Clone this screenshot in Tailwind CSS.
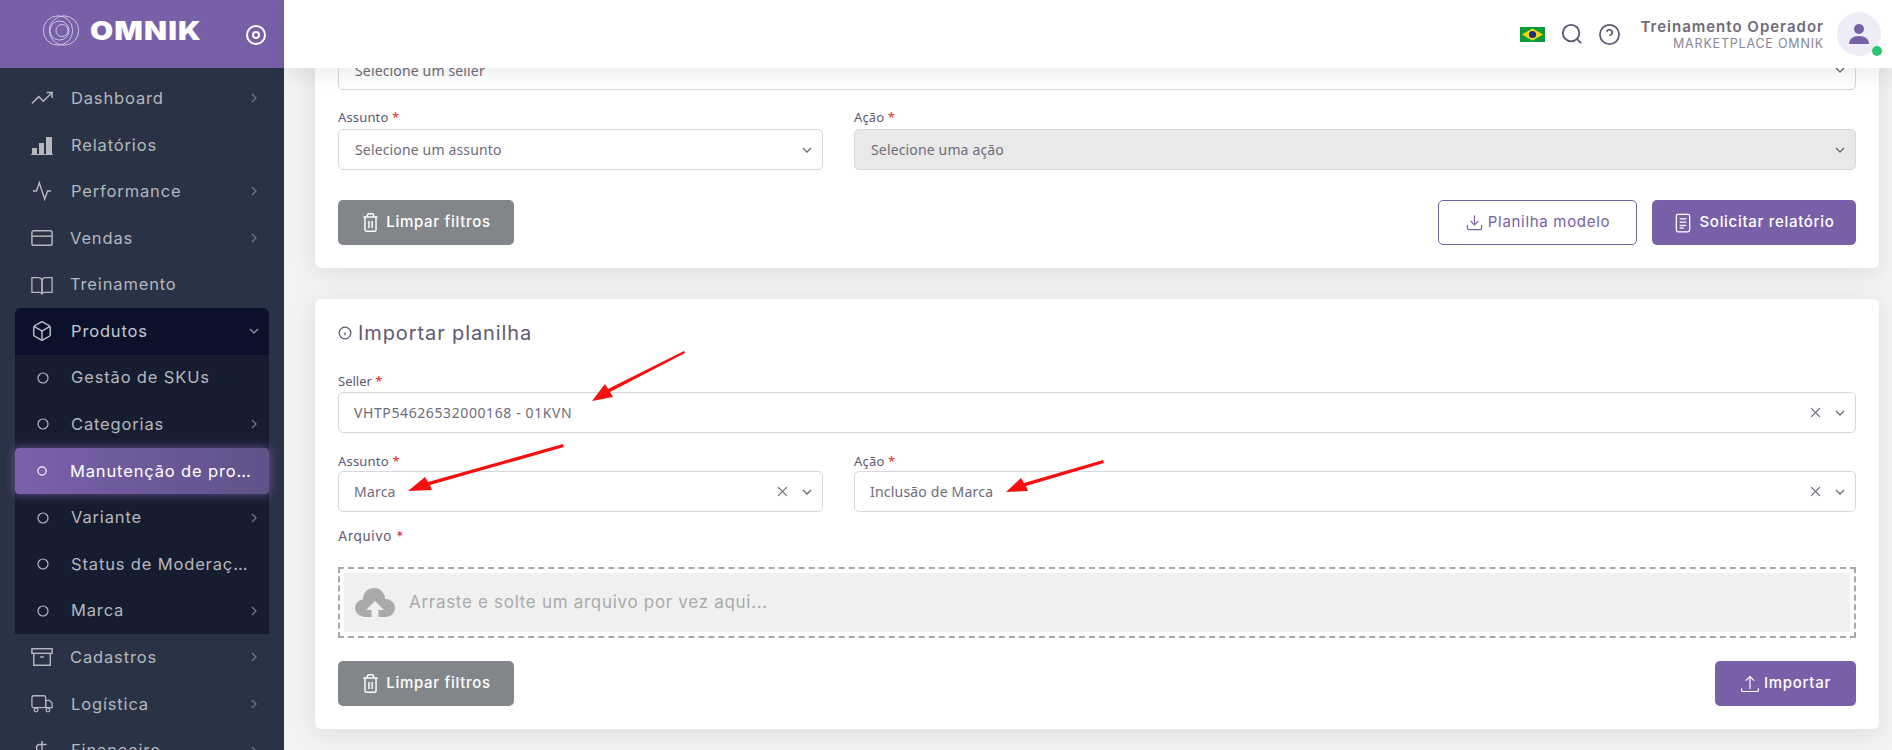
<!DOCTYPE html>
<html lang="pt-BR">
  <head>
    <meta charset="UTF-8" />
    <meta name="viewport" content="width=device-width, initial-scale=1.0" />
    <script src="https://cdn.jsdelivr.net/npm/@tailwindcss/browser@4"></script>
    <title>Omnik - Manutenção de produtos</title>
  </head>
  <body class="relative h-[750px] w-[1892px] overflow-hidden bg-[#f2f3f3] font-['Inter',sans-serif] text-[#6e6b7b]">
    <div class="flex h-full">
      <!-- SIDEBAR -->
      <aside class="h-full w-[284px] shrink-0 overflow-hidden bg-[#2a3246]">
        <div class="flex h-[68px] items-start bg-[#7860a9] pl-[43px] pt-[15px]">
          <svg class="h-[32px] w-[38px] shrink-0" viewBox="0 0 38 32" fill="none" stroke="#d6cde8" stroke-width="0.9">
            <circle cx="15" cy="15.500" r="14.700" />
            <circle cx="21" cy="15.500" r="14.700" />
            <circle cx="16.500" cy="15.500" r="9.500" />
            <circle cx="19" cy="15.500" r="6" />
          </svg>
          <span class="ml-[9px] mt-[-1px] w-[127px] origin-left scale-x-[1.15] text-[26px] leading-[34px] font-black tracking-[1px] text-white">OMNIK</span>
          <svg class="ml-[29px] mt-[10px] h-[20px] w-[20px] shrink-0" viewBox="0 0 20 20" fill="none" stroke="white" stroke-width="2">
            <circle cx="10" cy="10" r="9" />
            <circle cx="10" cy="10" r="3" />
          </svg>
        </div>

        <nav class="px-[15px] pt-[7px] text-[16.5px] tracking-[0.85px] text-[#b4b7bd]">
          <a class="flex h-[46.6px] items-center pl-[16px] pr-[7px]">
            <svg class="h-[22px] w-[22px] shrink-0" viewBox="0 0 24 24" fill="none" stroke="currentColor" stroke-width="1.6"><polyline points="23 6 13.5 15.5 8.5 10.5 1 18" /><polyline points="17 6 23 6 23 12" /></svg>
            <span class="ml-[18px] flex-1">Dashboard</span>
            <svg class="h-[16px] w-[16px] text-[#6f7585]" viewBox="0 0 24 24" fill="none" stroke="currentColor" stroke-width="2"><polyline points="9 18 15 12 9 6" /></svg>
          </a>
          <a class="flex h-[46.6px] items-center pl-[16px] pr-[7px]">
            <svg class="h-[22px] w-[22px] shrink-0" viewBox="0 0 22 22" fill="#b4b7bd"><rect x="1" y="14" width="5" height="6" /><rect x="8" y="9" width="5" height="11" /><rect x="15" y="3" width="6" height="17" /><rect x="0" y="20" width="22" height="1" /></svg>
            <span class="ml-[18px] flex-1">Relatórios</span>
          </a>
          <a class="flex h-[46.6px] items-center pl-[16px] pr-[7px]">
            <svg class="h-[22px] w-[22px] shrink-0" viewBox="0 0 24 24" fill="none" stroke="currentColor" stroke-width="1.6"><polyline points="22 12 18 12 15 21 9 3 6 12 2 12" /></svg>
            <span class="ml-[18px] flex-1">Performance</span>
            <svg class="h-[16px] w-[16px] text-[#6f7585]" viewBox="0 0 24 24" fill="none" stroke="currentColor" stroke-width="2"><polyline points="9 18 15 12 9 6" /></svg>
          </a>
          <a class="flex h-[46.6px] items-center pl-[16px] pr-[7px]">
            <svg class="h-[22px] w-[22px] shrink-0" viewBox="0 0 24 24" fill="none" stroke="currentColor" stroke-width="1.6"><rect x="1" y="4" width="22" height="16" rx="2" /><line x1="1" y1="10" x2="23" y2="10" /></svg>
            <span class="ml-[17px] flex-1">Vendas</span>
            <svg class="h-[16px] w-[16px] text-[#6f7585]" viewBox="0 0 24 24" fill="none" stroke="currentColor" stroke-width="2"><polyline points="9 18 15 12 9 6" /></svg>
          </a>
          <a class="flex h-[46.6px] items-center pl-[16px] pr-[7px]">
            <svg class="h-[22px] w-[22px] shrink-0" viewBox="0 0 24 24" fill="none" stroke="currentColor" stroke-width="1.4"><path d="M1 4h7a4 4 0 0 1 4 3v15a3 3 0 0 0-3-2H1z" /><path d="M23 4h-7a4 4 0 0 0-4 3v15a3 3 0 0 1 3-2h8z" /></svg>
            <span class="ml-[17px] flex-1">Treinamento</span>
          </a>

          <div>
            <a class="flex h-[46.6px] items-center rounded-t-[6px] bg-[#0c112b] pl-[16px] pr-[7px] text-[#c4c7cf]">
              <svg class="h-[22px] w-[22px] shrink-0" viewBox="0 0 24 24" fill="none" stroke="currentColor" stroke-width="1.5"><path d="M21 16V8a2 2 0 0 0-1-1.73l-7-4a2 2 0 0 0-2 0l-7 4A2 2 0 0 0 3 8v8a2 2 0 0 0 1 1.73l7 4a2 2 0 0 0 2 0l7-4A2 2 0 0 0 21 16z" /><polyline points="3.27 6.96 12 12.01 20.73 6.96" /><line x1="12" y1="22.08" x2="12" y2="12" /></svg>
              <span class="ml-[18px] flex-1">Produtos</span>
              <svg class="h-[16px] w-[16px] text-[#8b8f9c]" viewBox="0 0 24 24" fill="none" stroke="currentColor" stroke-width="2"><polyline points="6 9 12 15 18 9" /></svg>
            </a>
            <div class="bg-[#161d30]">
              <a class="flex h-[46.6px] items-center pl-[22px] pr-[7px]">
                <svg class="h-[12px] w-[12px] shrink-0" viewBox="0 0 12 12" fill="none" stroke="currentColor" stroke-width="1.2"><circle cx="6" cy="6" r="5" /></svg>
                <span class="ml-[22px] flex-1 truncate">Gestão de SKUs</span>
              </a>
              <a class="flex h-[46.6px] items-center pl-[22px] pr-[7px]">
                <svg class="h-[12px] w-[12px] shrink-0" viewBox="0 0 12 12" fill="none" stroke="currentColor" stroke-width="1.2"><circle cx="6" cy="6" r="5" /></svg>
                <span class="ml-[22px] flex-1 truncate">Categorias</span>
                <svg class="h-[16px] w-[16px] text-[#6f7585]" viewBox="0 0 24 24" fill="none" stroke="currentColor" stroke-width="2"><polyline points="9 18 15 12 9 6" /></svg>
              </a>
              <a class="flex h-[46.6px] items-center rounded-[4px] bg-gradient-to-r from-[#7b60ab] to-[#5f5289] pl-[22px] pr-[15px] text-white shadow-[0_0_10px_1px_rgba(120,96,169,0.7)]">
                <svg class="h-[10px] w-[10px] shrink-0" viewBox="0 0 12 12" fill="none" stroke="currentColor" stroke-width="1.4"><circle cx="6" cy="6" r="5" /></svg>
                <span class="ml-[23px] flex-1 truncate">Manutenção de produtos</span>
              </a>
              <a class="flex h-[46.6px] items-center pl-[22px] pr-[7px]">
                <svg class="h-[12px] w-[12px] shrink-0" viewBox="0 0 12 12" fill="none" stroke="currentColor" stroke-width="1.2"><circle cx="6" cy="6" r="5" /></svg>
                <span class="ml-[22px] flex-1 truncate">Variante</span>
                <svg class="h-[16px] w-[16px] text-[#6f7585]" viewBox="0 0 24 24" fill="none" stroke="currentColor" stroke-width="2"><polyline points="9 18 15 12 9 6" /></svg>
              </a>
              <a class="flex h-[46.6px] items-center pl-[22px] pr-[19px]">
                <svg class="h-[12px] w-[12px] shrink-0" viewBox="0 0 12 12" fill="none" stroke="currentColor" stroke-width="1.2"><circle cx="6" cy="6" r="5" /></svg>
                <span class="ml-[22px] flex-1 truncate">Status de Moderação</span>
              </a>
              <a class="flex h-[46.6px] items-center pl-[22px] pr-[7px]">
                <svg class="h-[12px] w-[12px] shrink-0" viewBox="0 0 12 12" fill="none" stroke="currentColor" stroke-width="1.2"><circle cx="6" cy="6" r="5" /></svg>
                <span class="ml-[22px] flex-1 truncate">Marca</span>
                <svg class="h-[16px] w-[16px] text-[#6f7585]" viewBox="0 0 24 24" fill="none" stroke="currentColor" stroke-width="2"><polyline points="9 18 15 12 9 6" /></svg>
              </a>
            </div>
          </div>

          <a class="flex h-[46.6px] items-center pl-[16px] pr-[7px]">
            <svg class="h-[22px] w-[22px] shrink-0" viewBox="0 0 24 24" fill="none" stroke="currentColor" stroke-width="1.6"><polyline points="21 8 21 21 3 21 3 8" /><rect x="1" y="3" width="22" height="5" /><line x1="10" y1="12" x2="14" y2="12" /></svg>
            <span class="ml-[17px] flex-1">Cadastros</span>
            <svg class="h-[16px] w-[16px] text-[#6f7585]" viewBox="0 0 24 24" fill="none" stroke="currentColor" stroke-width="2"><polyline points="9 18 15 12 9 6" /></svg>
          </a>
          <a class="flex h-[46.6px] items-center pl-[16px] pr-[7px]">
            <svg class="h-[22px] w-[22px] shrink-0" viewBox="0 0 24 24" fill="none" stroke="currentColor" stroke-width="1.4"><rect x="1" y="3" width="15" height="13" rx="2" /><polygon points="16 8 20 8 23 11 23 16 16 16 16 8" /><circle cx="5.5" cy="18.5" r="2" /><circle cx="18.5" cy="18.5" r="2" /></svg>
            <span class="ml-[18px] flex-1">Logística</span>
            <svg class="h-[16px] w-[16px] text-[#6f7585]" viewBox="0 0 24 24" fill="none" stroke="currentColor" stroke-width="2"><polyline points="9 18 15 12 9 6" /></svg>
          </a>
          <a class="flex h-[46.6px] items-center pl-[16px] pr-[7px]">
            <svg class="h-[22px] w-[22px] shrink-0" viewBox="0 0 24 24" fill="none" stroke="currentColor" stroke-width="1.6"><line x1="12" y1="1" x2="12" y2="23" /><path d="M17 5H9.5a3.5 3.5 0 0 0 0 7h5a3.5 3.5 0 0 1 0 7H6" /></svg>
            <span class="ml-[18px] flex-1">Financeiro</span>
            <svg class="h-[16px] w-[16px] text-[#6f7585]" viewBox="0 0 24 24" fill="none" stroke="currentColor" stroke-width="2"><polyline points="9 18 15 12 9 6" /></svg>
          </a>
        </nav>
      </aside>

      <div class="flex h-full min-w-0 flex-1 flex-col">
        <!-- TOPBAR -->
        <header class="relative z-10 flex h-[68px] shrink-0 items-center justify-end bg-white pr-[11px] shadow-[0_4px_24px_rgba(34,41,47,0.1)]">
          <svg class="h-[15px] w-[25px]" viewBox="0 0 25 15"><rect width="25" height="15" fill="#0d9a3a" /><polygon points="12.5 1.5 23 7.5 12.5 13.5 2 7.5" fill="#f7d90f" /><circle cx="12.5" cy="7.5" r="3.6" fill="#1c2f7c" /></svg>
          <svg class="ml-[16px] h-[22px] w-[22px] text-[#5e5873]" viewBox="0 0 24 24" fill="none" stroke="currentColor" stroke-width="2"><circle cx="11" cy="11" r="9" /><line x1="22" y1="22" x2="17.5" y2="17.5" /></svg>
          <svg class="ml-[15px] h-[23px] w-[23px] text-[#5e5873]" viewBox="0 0 24 24" fill="none" stroke="currentColor" stroke-width="1.8"><circle cx="12" cy="12" r="10" /><path d="M9.09 9a3 3 0 0 1 5.83 1c0 2-3 3-3 3" /><line x1="12" y1="17" x2="12.01" y2="17" /></svg>
          <div class="ml-[19px] text-right">
            <p class="text-[15px] leading-[18px] font-semibold tracking-[1px] text-[#6e6b7b]">Treinamento Operador</p>
            <p class="text-[12.5px] leading-[15px] tracking-[0.8px] text-[#8a8796]">MARKETPLACE OMNIK</p>
          </div>
          <div class="relative ml-[13px] flex h-[44px] w-[44px] items-center justify-center rounded-full bg-[#eeecf6]">
            <svg class="h-[22px] w-[22px]" viewBox="0 0 22 22" fill="#7860a9"><circle cx="11" cy="6" r="5" /><path d="M1 21c0-5 4-8 10-8s10 3 10 8z" /></svg>
            <span class="absolute bottom-[0px] right-[-1px] h-[10px] w-[10px] rounded-full bg-[#28c76f]"></span>
          </div>
        </header>

        <!-- CONTENT -->
        <main class="min-h-0 flex-1 overflow-hidden pl-[31px] pr-[13px]">
          <section class="-mt-[19px] h-[219px] rounded-[6px] bg-white px-[23px] shadow-[0_4px_24px_rgba(34,41,47,0.1)]">
            <div class="flex h-[41px] items-center justify-between rounded-[5px] border border-[#d8d6de] bg-white pl-[16px] pr-[7px] font-['Noto_Sans',sans-serif] text-[14px] tracking-[0.15px] text-[#6e6b7b]">
              <span class="pt-[2px]">Selecione um seller</span>
              <svg class="h-[16px] w-[16px]" viewBox="0 0 24 24" fill="none" stroke="currentColor" stroke-width="2"><polyline points="6 9 12 15 18 9" /></svg>
            </div>
            <div class="mt-[16px] grid grid-cols-[485px_1fr] gap-x-[31px] font-['Noto_Sans',sans-serif] tracking-[0.15px]">
              <div>
                <label class="block h-[23px] text-[13px] leading-[22px] text-[#5e5873]">Assunto <span class="text-[#ea1f1f]">*</span></label>
                <div class="flex h-[41px] items-center justify-between rounded-[5px] border border-[#d8d6de] bg-white pl-[16px] pr-[7px] text-[14px]">
                  <span>Selecione um assunto</span>
                  <svg class="h-[16px] w-[16px]" viewBox="0 0 24 24" fill="none" stroke="currentColor" stroke-width="2"><polyline points="6 9 12 15 18 9" /></svg>
                </div>
              </div>
              <div>
                <label class="block h-[23px] text-[13px] leading-[22px] text-[#5e5873]">Ação <span class="text-[#ea1f1f]">*</span></label>
                <div class="flex h-[41px] items-center justify-between rounded-[5px] border border-[#d8d6de] bg-[#e9e9e9] pl-[16px] pr-[7px] text-[14px]">
                  <span>Selecione uma ação</span>
                  <svg class="h-[16px] w-[16px]" viewBox="0 0 24 24" fill="none" stroke="currentColor" stroke-width="2"><polyline points="6 9 12 15 18 9" /></svg>
                </div>
              </div>
            </div>
            <div class="mt-[30px] flex items-center justify-between text-[15px] font-medium tracking-[0.7px]">
              <button class="flex h-[45px] w-[176px] items-center justify-center gap-[6px] rounded-[5px] bg-[#82868b] text-white">
                <svg class="h-[19px] w-[19px]" viewBox="0 0 24 24" fill="none" stroke="currentColor" stroke-width="1.8"><polyline points="3 5 21 5" /><path d="M19 5v16a2 2 0 0 1-2 2H7a2 2 0 0 1-2-2V5m3 0V3a2 2 0 0 1 2-2h4a2 2 0 0 1 2 2v2" /><line x1="10" y1="10" x2="10" y2="19" /><line x1="14" y1="10" x2="14" y2="19" /></svg>
                Limpar filtros
              </button>
              <div class="flex gap-[15px]">
                <button class="flex h-[45px] w-[199px] items-center justify-center gap-[4px] rounded-[5px] border border-[#7860a9] bg-white font-normal text-[#7860a9]">
                  <svg class="h-[19px] w-[19px]" viewBox="0 0 24 24" fill="none" stroke="currentColor" stroke-width="1.5"><path d="M21 15v4a2 2 0 0 1-2 2H5a2 2 0 0 1-2-2v-4" /><polyline points="7 10 12 15 17 10" /><line x1="12" y1="15" x2="12" y2="3" /></svg>
                  Planilha modelo
                </button>
                <button class="flex h-[45px] w-[204px] items-center justify-center gap-[6px] rounded-[5px] bg-[#7860a9] text-white">
                  <svg class="h-[20px] w-[20px]" viewBox="0 0 24 24" fill="none" stroke="currentColor" stroke-width="1.5"><rect x="4" y="1.5" width="16" height="21" rx="2" /><line x1="8" y1="7" x2="16" y2="7" /><line x1="8" y1="11" x2="16" y2="11" /><line x1="8" y1="15" x2="16" y2="15" /><line x1="8" y1="18" x2="13" y2="18" /></svg>
                  Solicitar relatório
                </button>
              </div>
            </div>
          </section>

          <section class="mt-[31px] h-[430px] rounded-[6px] bg-white px-[23px] pt-[22px] shadow-[0_4px_24px_rgba(34,41,47,0.1)]">
            <h2 class="flex h-[24px] items-center text-[20px] font-normal tracking-[0.9px] text-[#5e5873]">
              <svg class="mr-[6px] h-[14px] w-[14px]" viewBox="0 0 24 24" fill="none" stroke="currentColor" stroke-width="2.2"><circle cx="12" cy="12" r="10" /><line x1="12" y1="16" x2="12" y2="11" /><line x1="12" y1="8" x2="12.01" y2="8" /></svg>
              Importar planilha
            </h2>

            <label class="mt-[26px] block h-[21px] font-['Noto_Sans',sans-serif] text-[13px] leading-[20px] text-[#5e5873]">Seller <span class="text-[#ea1f1f]">*</span></label>
            <div class="flex h-[41px] items-center rounded-[5px] border border-[#d8d6de] bg-white pl-[15px] pr-[7px] font-['Noto_Sans',sans-serif] text-[14px]">
              <span class="flex-1 tracking-[0.6px]">VHTP54626532000168 - 01KVN</span>
              <svg class="mr-[9px] h-[15px] w-[15px]" viewBox="0 0 24 24" fill="none" stroke="currentColor" stroke-width="2"><line x1="19" y1="5" x2="5" y2="19" /><line x1="5" y1="5" x2="19" y2="19" /></svg>
              <svg class="h-[16px] w-[16px]" viewBox="0 0 24 24" fill="none" stroke="currentColor" stroke-width="2"><polyline points="6 9 12 15 18 9" /></svg>
            </div>

            <div class="mt-[18px] grid grid-cols-[485px_1fr] gap-x-[31px] font-['Noto_Sans',sans-serif] tracking-[0.2px]">
              <div>
                <label class="block h-[20px] text-[13px] leading-[20px] text-[#5e5873]">Assunto <span class="text-[#ea1f1f]">*</span></label>
                <div class="flex h-[41px] items-center rounded-[5px] border border-[#d8d6de] bg-white pl-[15px] pr-[7px] text-[14px]">
                  <span class="flex-1">Marca</span>
                  <svg class="mr-[9px] h-[15px] w-[15px]" viewBox="0 0 24 24" fill="none" stroke="currentColor" stroke-width="2"><line x1="19" y1="5" x2="5" y2="19" /><line x1="5" y1="5" x2="19" y2="19" /></svg>
                  <svg class="h-[16px] w-[16px]" viewBox="0 0 24 24" fill="none" stroke="currentColor" stroke-width="2"><polyline points="6 9 12 15 18 9" /></svg>
                </div>
              </div>
              <div>
                <label class="block h-[20px] text-[13px] leading-[20px] text-[#5e5873]">Ação <span class="text-[#ea1f1f]">*</span></label>
                <div class="flex h-[41px] items-center rounded-[5px] border border-[#d8d6de] bg-white pl-[15px] pr-[7px] text-[14px]">
                  <span class="flex-1">Inclusão de Marca</span>
                  <svg class="mr-[9px] h-[15px] w-[15px]" viewBox="0 0 24 24" fill="none" stroke="currentColor" stroke-width="2"><line x1="19" y1="5" x2="5" y2="19" /><line x1="5" y1="5" x2="19" y2="19" /></svg>
                  <svg class="h-[16px] w-[16px]" viewBox="0 0 24 24" fill="none" stroke="currentColor" stroke-width="2"><polyline points="6 9 12 15 18 9" /></svg>
                </div>
              </div>
            </div>

            <label class="mt-[14px] block h-[20px] text-[13.5px] leading-[20px] tracking-[0.7px] text-[#5e5873]">Arquivo <span class="text-[#ea1f1f]">*</span></label>
            <div class="mt-[21px] h-[71px] border-2 border-dashed border-[#a9a9a9] p-[4px]">
              <div class="flex h-full items-center bg-[#f0f0f0] pl-[11px] text-[17px] tracking-[0.7px] text-[#aaaaaa]">
                <svg class="h-[30px] w-[40px]" viewBox="0 0 40 30" fill="#aaaaaa"><circle cx="8.500" cy="20" r="8.500" /><circle cx="19" cy="11" r="11" /><circle cx="31" cy="20" r="9" /><rect x="8" y="16" width="23" height="13" /><path d="M20 13l-9 9h5.500v8h7v-8H29z" fill="#f0f0f0" /></svg>
                <span class="ml-[14px]">Arraste e solte um arquivo por vez aqui...</span>
              </div>
            </div>

            <div class="mt-[23px] flex items-center justify-between text-[15px] font-medium tracking-[0.7px]">
              <button class="flex h-[45px] w-[176px] items-center justify-center gap-[6px] rounded-[5px] bg-[#82868b] text-white">
                <svg class="h-[19px] w-[19px]" viewBox="0 0 24 24" fill="none" stroke="currentColor" stroke-width="1.8"><polyline points="3 5 21 5" /><path d="M19 5v16a2 2 0 0 1-2 2H7a2 2 0 0 1-2-2V5m3 0V3a2 2 0 0 1 2-2h4a2 2 0 0 1 2 2v2" /><line x1="10" y1="10" x2="10" y2="19" /><line x1="14" y1="10" x2="14" y2="19" /></svg>
                Limpar filtros
              </button>
              <button class="flex h-[45px] w-[141px] items-center justify-center gap-[4px] rounded-[5px] bg-[#7860a9] text-white">
                <svg class="h-[20px] w-[20px]" viewBox="0 0 24 24" fill="none" stroke="currentColor" stroke-width="1.4"><path d="M2 17v3a1 1 0 0 0 1 1h18a1 1 0 0 0 1-1v-3" /><polyline points="7 8 12 3 17 8" /><line x1="12" y1="3" x2="12" y2="18" /></svg>
                Importar
              </button>
            </div>
          </section>
        </main>
      </div>
    </div>

    <!-- setas vermelhas por cima da tela -->
    <svg class="pointer-events-none absolute inset-0 z-20 h-[750px] w-[1892px]" viewBox="0 0 1892 750" fill="#f50f0f">
      <polygon points="684,351 685,353 610,392 613,397 592,401 605,384 608,389" />
      <polygon points="563,444 564,447 430,485 432,490 408,491 425,477 428,482" />
      <polygon points="1103,460 1104,463 1026,486 1028,491 1006,492 1021,478 1024,483" />
    </svg>
  </body>
</html>
